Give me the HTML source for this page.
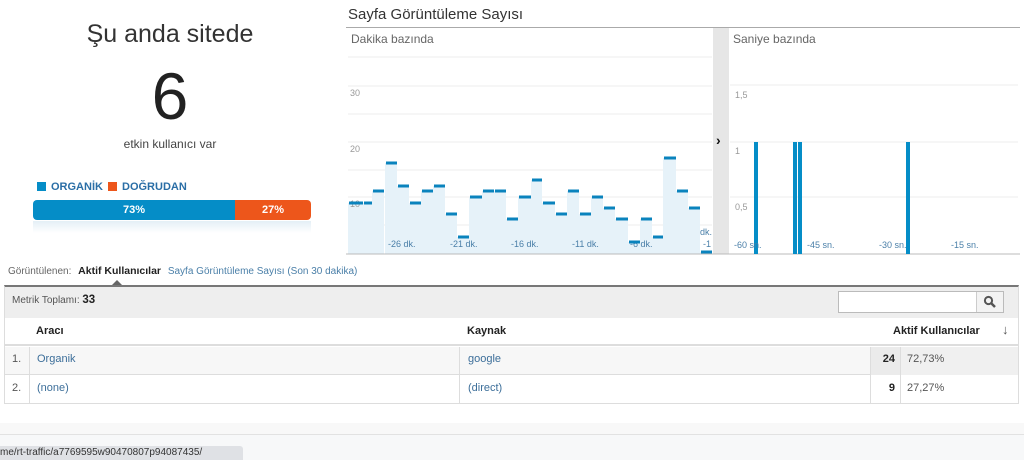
<!DOCTYPE html>
<html><head><meta charset="utf-8">
<style>
*{margin:0;padding:0;box-sizing:border-box}
body{width:1024px;height:460px;overflow:hidden;background:#fff;font-family:"Liberation Sans",Arial,sans-serif;position:relative;color:#222}
.abs{position:absolute}
</style></head><body>
<div class="abs" style="left:0;top:20px;width:340px;text-align:center;font-size:25px;color:#333">Şu anda sitede</div>
<div class="abs" style="left:0;top:56px;width:340px;text-align:center;font-size:66px;color:#222;line-height:80px">6</div>
<div class="abs" style="left:0;top:137px;width:340px;text-align:center;font-size:12px;color:#444">etkin kullanıcı var</div>

<div class="abs" style="left:37px;top:182px;width:9px;height:9px;background:#058dc7"></div>
<div class="abs" style="left:51px;top:181px;font-size:11px;font-weight:bold;color:#2a6ea6">ORGANİK</div>
<div class="abs" style="left:108px;top:182px;width:9px;height:9px;background:#ed561b"></div>
<div class="abs" style="left:122px;top:181px;font-size:11px;font-weight:bold;color:#2a6ea6">DOĞRUDAN</div>
<div class="abs" style="left:33px;top:200px;width:202px;height:20px;background:#058dc7;border-radius:4px 0 0 4px;color:#fff;font-size:11px;font-weight:bold;text-align:center;line-height:20px">73%</div>
<div class="abs" style="left:235px;top:200px;width:76px;height:20px;background:#ed561b;border-radius:0 4px 4px 0;color:#fff;font-size:11px;font-weight:bold;text-align:center;line-height:20px">27%</div>
<div class="abs" style="left:33px;top:221px;width:278px;height:12px;background:linear-gradient(#e4eff6,#fff)"></div>

<div class="abs" style="left:348px;top:6px;font-size:15px;color:#333">Sayfa Görüntüleme Sayısı</div>
<div class="abs" style="left:346px;top:27px;width:674px;height:1px;background:#aaa"></div>

<svg class="abs" style="left:0;top:0" width="1024" height="260">
<g stroke="#eee" stroke-width="1">
<line x1="348" y1="57" x2="712" y2="57"/><line x1="348" y1="86" x2="712" y2="86"/><line x1="348" y1="114" x2="712" y2="114"/><line x1="348" y1="142" x2="712" y2="142"/><line x1="348" y1="170" x2="712" y2="170"/><line x1="348" y1="197" x2="712" y2="197"/><line x1="348" y1="225" x2="712" y2="225"/>
<line x1="730" y1="85" x2="1018" y2="85"/><line x1="730" y1="142" x2="1018" y2="142"/><line x1="730" y1="197" x2="1018" y2="197"/>
</g>
<g fill="#e6f2f9" id="f"></g>
<g font-size="9" fill="#999" font-family="Liberation Sans,sans-serif">
<text x="350" y="96">30</text><text x="350" y="152">20</text><text x="350" y="207">10</text>
<text x="735" y="98">1,5</text><text x="735" y="154">1</text><text x="735" y="210">0,5</text>
</g>
<rect x="713" y="28" width="16" height="226" fill="#e6e6e6"/>
<text x="716" y="145" font-size="14" font-weight="bold" fill="#111">›</text>
<line x1="346" y1="254" x2="1020" y2="254" stroke="#bbb"/>
<g fill="#058dc7">
<rect x="754" y="142" width="4" height="112"/><rect x="793" y="142" width="4" height="112"/><rect x="798" y="142" width="4" height="112"/><rect x="906" y="142" width="4" height="112"/>
</g>
<g font-size="9" fill="#4a7fa8" font-family="Liberation Sans,sans-serif">
<text x="388" y="247">-26 dk.</text><text x="450" y="247">-21 dk.</text><text x="511" y="247">-16 dk.</text><text x="572" y="247">-11 dk.</text><text x="630" y="247">-6 dk.</text><text x="700" y="235">dk.</text><text x="703" y="247">-1</text>
<text x="734" y="248">-60 sn.</text><text x="807" y="248">-45 sn.</text><text x="879" y="248">-30 sn.</text><text x="951" y="248">-15 sn.</text>
</g>
<g fill="#0a83bd" id="b"></g>
</svg>
<div class="abs" style="left:351px;top:32px;font-size:12px;color:#666">Dakika bazında</div>
<div class="abs" style="left:733px;top:32px;font-size:12px;color:#666">Saniye bazında</div>

<div class="abs" style="left:8px;top:265px;font-size:10px;color:#666">Görüntülenen: <b style="color:#222;font-size:10.5px;margin-left:4px">Aktif Kullanıcılar</b> <span style="color:#4a7fa8;margin-left:4px">Sayfa Görüntüleme Sayısı (Son 30 dakika)</span></div>
<div class="abs" style="left:111px;top:280px;width:0;height:0;border-left:6px solid transparent;border-right:6px solid transparent;border-bottom:6px solid #666"></div>

<div class="abs" style="left:4px;top:285px;width:1015px;height:119px;border:1px solid #ddd;border-top:2px solid #777"></div>
<div class="abs" style="left:5px;top:287px;width:1013px;height:31px;background:#eee"></div>
<div class="abs" style="left:12px;top:294px;font-size:10px;color:#555">Metrik Toplamı: <b style="color:#222;font-size:11.5px">33</b></div>
<div class="abs" style="left:838px;top:291px;width:166px;height:22px;border:1px solid #bbb;background:#fff"></div>
<div class="abs" style="left:976px;top:292px;width:27px;height:20px;background:#f3f3f3;border-left:1px solid #ccc"></div>
<svg class="abs" style="left:983px;top:295px" width="14" height="14"><circle cx="5.5" cy="5.5" r="3.6" fill="none" stroke="#555" stroke-width="2"/><line x1="8" y1="8" x2="12" y2="12" stroke="#555" stroke-width="2.5"/></svg>

<div class="abs" style="left:5px;top:318px;width:1013px;height:28px;border-bottom:2px solid #ddd"></div>
<div class="abs" style="left:36px;top:325px;font-size:11px;font-weight:bold">Aracı</div>
<div class="abs" style="left:467px;top:325px;font-size:11px;font-weight:bold">Kaynak</div>
<div class="abs" style="left:893px;top:325px;font-size:11px;font-weight:bold">Aktif Kullanıcılar</div>
<div class="abs" style="left:1002px;top:322px;font-size:13px;color:#555">↓</div>

<div class="abs" style="left:5px;top:347px;width:1013px;height:28px;background:#f7f7f7;border-bottom:1px solid #ddd"></div>
<div class="abs" style="left:5px;top:375px;width:1013px;height:28px;background:#fff"></div>
<div class="abs" style="left:870px;top:347px;width:30px;height:28px;background:#ebebeb"></div>
<div class="abs" style="left:900px;top:347px;width:118px;height:28px;background:#f0f0f0"></div>
<div class="abs" style="left:29px;top:347px;width:1px;height:56px;background:#ddd"></div>
<div class="abs" style="left:459px;top:347px;width:1px;height:56px;background:#ddd"></div>
<div class="abs" style="left:870px;top:347px;width:1px;height:56px;background:#ddd"></div>
<div class="abs" style="left:900px;top:347px;width:1px;height:56px;background:#ddd"></div>
<div class="abs" style="left:12px;top:353px;font-size:11px;color:#555">1.</div>
<div class="abs" style="left:37px;top:353px;font-size:11px;color:#3d6f9a">Organik</div>
<div class="abs" style="left:468px;top:353px;font-size:11px;color:#3d6f9a">google</div>
<div class="abs" style="left:870px;top:353px;width:25px;text-align:right;font-size:11px;font-weight:bold">24</div>
<div class="abs" style="left:907px;top:353px;font-size:11px;color:#555">72,73%</div>
<div class="abs" style="left:12px;top:382px;font-size:11px;color:#555">2.</div>
<div class="abs" style="left:37px;top:382px;font-size:11px;color:#3d6f9a">(none)</div>
<div class="abs" style="left:468px;top:382px;font-size:11px;color:#3d6f9a">(direct)</div>
<div class="abs" style="left:870px;top:382px;width:25px;text-align:right;font-size:11px;font-weight:bold">9</div>
<div class="abs" style="left:907px;top:382px;font-size:11px;color:#555">27,27%</div>

<div class="abs" style="left:0;top:423px;width:1024px;height:11px;background:#f8f8f8"></div>
<div class="abs" style="left:0;top:434px;width:1024px;height:1px;background:#e2e2e2"></div>
<div class="abs" style="left:0;top:435px;width:1024px;height:25px;background:#f7f8f9"></div>
<div class="abs" style="left:0;top:446px;width:243px;height:14px;background:#dfe1e5;border-radius:0 3px 0 0;font-size:10px;color:#333;line-height:14px;overflow:hidden;white-space:nowrap">me/rt-traffic/a7769595w90470807p94087435/</div>

<script>
var d=[[348,363,203],[363,372,203],[372,384,191],[385,397,163],[397,409,186],[409,421,203],[421,433,191],[433,445,186],[445,457,214],[457,469,237],[469,482,197],[482,494,191],[494,506,191],[506,518,219],[518,531,197],[531,542,180],[542,555,203],[555,567,214],[567,579,191],[579,591,214],[591,603,197],[603,615,208],[615,628,219],[628,640,242],[640,652,219],[652,663,237],[663,676,158],[676,688,191],[688,700,208],[700,712,252]];
var ns="http://www.w3.org/2000/svg",f=document.getElementById('f'),b=document.getElementById('b');
d.forEach(function(r){var a=document.createElementNS(ns,'rect');a.setAttribute('x',r[0]);a.setAttribute('y',r[2]);a.setAttribute('width',r[1]-r[0]);a.setAttribute('height',254-r[2]);f.appendChild(a);
var c=document.createElementNS(ns,'rect');c.setAttribute('x',r[0]+1);c.setAttribute('y',r[2]-1.5);c.setAttribute('width',r[1]-r[0]-1);c.setAttribute('height',3);b.appendChild(c);});
</script>
</body></html>
